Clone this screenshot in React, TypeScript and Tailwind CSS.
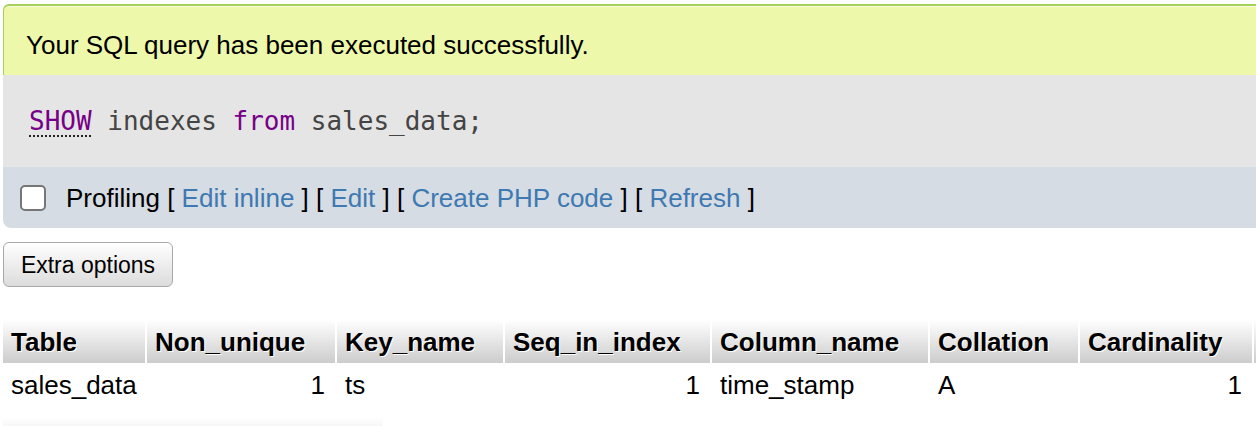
const columns = [
  { name: "Table", width: "w-[142px]" },
  { name: "Non_unique", width: "w-[188px]" },
  { name: "Key_name", width: "w-[166px]" },
  { name: "Seq_in_index", width: "w-[205px]" },
  { name: "Column_name", width: "w-[216px]" },
  { name: "Collation", width: "w-[148px]" },
  { name: "Cardinality", width: "w-[172px]" },
  { name: "", width: "w-[160px]" },
];

const row = [
  { value: "sales_data", right: false },
  { value: "1", right: true },
  { value: "ts", right: false },
  { value: "1", right: true },
  { value: "time_stamp", right: false },
  { value: "A", right: false },
  { value: "1", right: true },
  { value: "", right: false },
];

function Link({ children }: { children: React.ReactNode }) {
  return <a className="text-[#3e79b2] cursor-pointer">{children}</a>;
}

export default function App() {
  return (
    <div className="w-[1256px] h-[426px] overflow-hidden bg-white text-black font-['Liberation_Sans',Arial,sans-serif]">
      <div className="ml-[3px] pt-[4px] w-[1320px]">
        {/* success message */}
        <div className="h-[71px] border-t-2 border-l border-[#a7cf5c] rounded-tl-[6px] bg-[#edf8aa] shadow-[inset_0_1px_0_#f8fcdc] pl-[22px] pt-[24px] text-[26px] leading-[30px]">
          Your SQL query has been executed successfully.
        </div>

        {/* query */}
        <div className="h-[92px] bg-[#e5e5e5] pl-[26px] pt-[31px] text-[26px] leading-[30px] text-[#444] font-['DejaVu_Sans_Mono',monospace]">
          <span className="text-[#770088] underline decoration-dotted decoration-[#222] decoration-2 underline-offset-[5px]">
            SHOW
          </span>{" "}
          indexes <span className="text-[#770088]">from</span> sales_data;
        </div>

        {/* profiling bar */}
        <div className="h-[61px] bg-[#d5dce3] rounded-bl-[8px] flex items-center pl-[17px] text-[26px] leading-[30px]">
          <span className="w-[26px] h-[26px] border-2 border-[#767676] rounded-[5px] bg-white shrink-0" />
          <span className="ml-[20px]">
            Profiling [ <Link>Edit inline</Link> ] [ <Link>Edit</Link> ] [{" "}
            <Link>Create PHP code</Link> ] [ <Link>Refresh</Link> ]
          </span>
        </div>
      </div>

      <button className="ml-[3px] mt-[14px] w-[170px] h-[45px] border border-[#a8a8a8] rounded-[6px] bg-linear-to-b from-white to-[#dcdcdc] text-[23px] leading-[28px] text-black">
        Extra options
      </button>

      {/* result table */}
      <div className="ml-[3px] mt-[33px] w-[1400px]">
        <div className="flex gap-x-[2px]">
          {columns.map((c, i) => (
            <div
              key={i}
              className={`${c.width} shrink-0 h-[43px] flex items-center px-[8px] bg-linear-to-b from-white to-[#cccccc] font-bold text-[26px] leading-[30px] [text-shadow:1px_1px_0_#fff]`}
            >
              {c.name}
            </div>
          ))}
        </div>
        <div className="flex gap-x-[2px]">
          {columns.map((c, i) => (
            <div
              key={i}
              className={`${c.width} shrink-0 h-[40px] pt-[7px] px-[8px] text-[26px] leading-[30px] ${
                row[i].right ? "text-right pr-[10px]" : ""
              }`}
            >
              {row[i].value}
            </div>
          ))}
        </div>
        <div className="mt-[14px] w-[380px] h-[9px] bg-linear-to-b from-white to-[#f7f7f7]" />
      </div>
    </div>
  );
}
